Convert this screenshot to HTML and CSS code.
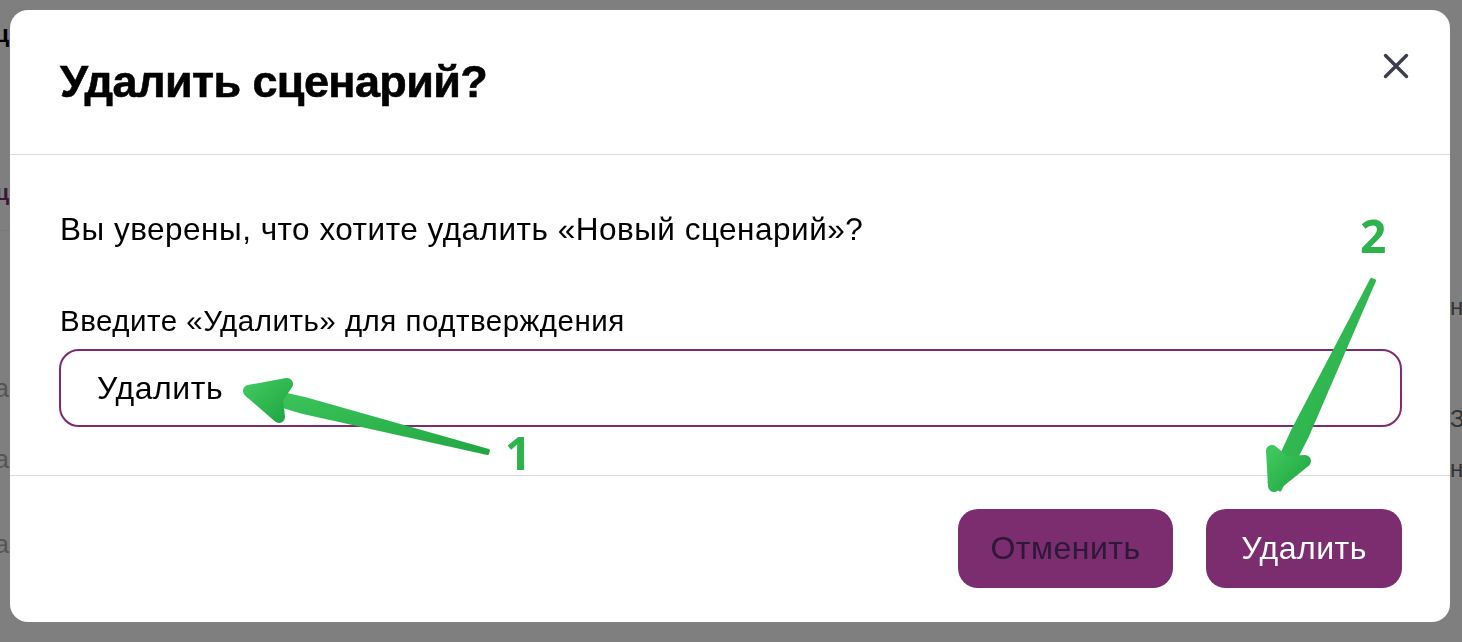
FILE: index.html
```html
<!DOCTYPE html>
<html lang="ru">
<head>
<meta charset="utf-8">
<title>Удалить сценарий?</title>
<link rel="stylesheet" href="styles.css">
</head>
<body>
<div class="page">
  <div class="bg-left">
    <div class="bg-line l1"><span class="t-black">ц</span></div>
    <div class="bg-line l2"><span class="t-purple">сц</span></div>
    <div class="bg-rule"></div>
    <div class="bg-line l3"><span class="t-gray">а</span></div>
    <div class="bg-line l4"><span class="t-gray">а</span></div>
    <div class="bg-line l5"><span class="t-gray">а</span></div>
  </div>
  <div class="bg-right">
    <div class="bg-rline r1">нет</div>
    <div class="bg-rline r2">Зада</div>
    <div class="bg-rline r3">на</div>
  </div>
</div>

<div class="overlay">
  <div class="modal">
    <header class="modal-header">
      <h2 class="modal-title">Удалить сценарий?</h2>
      <button class="close" aria-label="Закрыть">
        <svg width="26" height="26" viewBox="0 0 26 26"><path d="M2.5 2.5 L23.5 23.5 M23.5 2.5 L2.5 23.5" stroke="#3c3d4f" stroke-width="3.4" stroke-linecap="round"/></svg>
      </button>
    </header>
    <div class="modal-body">
      <p class="question">Вы уверены, что хотите удалить «Новый сценарий»?</p>
      <label class="label">Введите «Удалить» для подтверждения</label>
      <div class="input">Удалить</div>
    </div>
    <footer class="modal-footer">
      <button class="btn btn-cancel">Отменить</button>
      <button class="btn btn-danger">Удалить</button>
    </footer>
  </div>
</div>

<svg class="annotations" viewBox="0 0 1462 642" width="1462" height="642">
  <defs>
    <linearGradient id="g1" x1="0" y1="0" x2="1" y2="1">
      <stop offset="0" stop-color="#3fc65d"/>
      <stop offset="1" stop-color="#22a843"/>
    </linearGradient>
  </defs>
  <g fill="url(#g1)" stroke="url(#g1)" stroke-linejoin="round" stroke-linecap="round">
    <polygon stroke-width="3" points="488.4,450.5 305.5,398.6 250.2,386.2 247.8,395.8 302.1,412.2 487.6,453.5"/>
    <polygon stroke-width="12" points="287,384 249,391 279,417 277,399"/>
    <polygon stroke-width="3" points="1371.5,279.4 1374.5,280.6 1307.1,436.9 1280,490 1269,482 1292.7,430.1"/>
    <polygon stroke-width="12" points="1305,461 1274,486 1272,451 1285,462"/>
  </g>
  <text class="num" x="505" y="470">1</text>
  <text class="num" x="1360" y="253">2</text>
</svg>
</body>
</html>
```

FILE: styles.css
```css
* {
  box-sizing: border-box;
}

html,
body {
  margin: 0;
  padding: 0;
}

body {
  width: 1462px;
  height: 642px;
  overflow: hidden;
  background: #ffffff;
  font-family: "Liberation Sans", Arial, sans-serif;
  color: #000;
}

/* ---------- background page (dimmed under overlay) ---------- */
.page {
  display: flex;
  justify-content: space-between;
  height: 642px;
}

.bg-left {
  width: 9px;
  display: flex;
  flex-direction: column;
}

.bg-line {
  display: flex;
  justify-content: flex-end;
  white-space: nowrap;
  height: 26px;
  line-height: 26px;
  font-size: 26px;
}

.l1 { margin-top: 21px; font-size: 24px; }
.l2 { margin-top: 133px; font-size: 22px; }
.l3 { margin-top: 144px; }
.l4 { margin-top: 45px; }
.l5 { margin-top: 59px; }

.bg-rule {
  margin-top: 24px;
  height: 1px;
  width: 9px;
  background: #eeeeee;
}

.t-black { color: #000; font-weight: 700; }
.t-purple { color: #7b2d6f; font-weight: 700; }
.t-gray { color: #aaaaaa; }

.bg-right {
  width: 12px;
  display: flex;
  flex-direction: column;
  white-space: nowrap;
  font-size: 24px;
  color: #666;
}

.bg-rline {
  height: 28px;
  line-height: 28px;
}

.r1 { margin-top: 293px; }
.r2 { margin-top: 84px; }
.r3 { margin-top: 22px; }

/* ---------- overlay + modal ---------- */
.overlay {
  position: fixed;
  inset: 0;
  background: rgba(0, 0, 0, 0.5);
  padding: 10px 12px 20px 10px;
  display: flex;
}

.modal {
  flex: 1;
  background: #ffffff;
  border-radius: 18px;
  display: flex;
  flex-direction: column;
  overflow: hidden;
}

.modal-header {
  height: 145px;
  border-bottom: 1px solid #dcdcdc;
  display: flex;
  align-items: center;
  justify-content: space-between;
  padding: 0 41px 0 50px;
}

.modal-title {
  margin: 0;
  font-size: 45px;
  line-height: 46px;
  font-weight: 700;
  letter-spacing: -0.6px;
  -webkit-text-stroke: 0.6px #000;
  color: #000;
}

.close {
  align-self: flex-start;
  margin-top: 43px;
  width: 26px;
  height: 26px;
  padding: 0;
  border: 0;
  background: transparent;
  display: flex;
}

.modal-body {
  height: 321px;
  border-bottom: 1px solid #dcdcdc;
  padding: 56px 48px 0 49px;
  display: flex;
  flex-direction: column;
}

.question {
  margin: 0 0 0 1px;
  font-size: 31.5px;
  line-height: 36px;
  letter-spacing: 0.5px;
}

.label {
  margin: 57px 0 0 1px;
  font-size: 29.5px;
  line-height: 34px;
  letter-spacing: 0.5px;
}

.input {
  margin-top: 11px;
  height: 78px;
  border: 2px solid #7b2d6f;
  border-radius: 20px;
  padding: 0 36px;
  display: flex;
  align-items: center;
  font-size: 32px;
  letter-spacing: 0.6px;
}

.modal-footer {
  flex: 1;
  display: flex;
  justify-content: flex-end;
  align-items: flex-start;
  gap: 33px;
  padding: 33px 48px 0 0;
}

.btn {
  height: 79px;
  border: 0;
  border-radius: 20px;
  background: #7b2d6f;
  font-family: "Liberation Sans", Arial, sans-serif;
  font-size: 32px;
  letter-spacing: 0.5px;
  padding: 0;
}

.btn-cancel {
  width: 215px;
  color: #2c1838;
}

.btn-danger {
  width: 196px;
  color: #ffffff;
}

/* ---------- annotations ---------- */
.annotations {
  position: fixed;
  left: 0;
  top: 0;
  pointer-events: none;
}

.num {
  font-family: "Open Sans", "DejaVu Sans", sans-serif;
  font-weight: 700;
  font-size: 46px;
  fill: #2db34c;
}
```
